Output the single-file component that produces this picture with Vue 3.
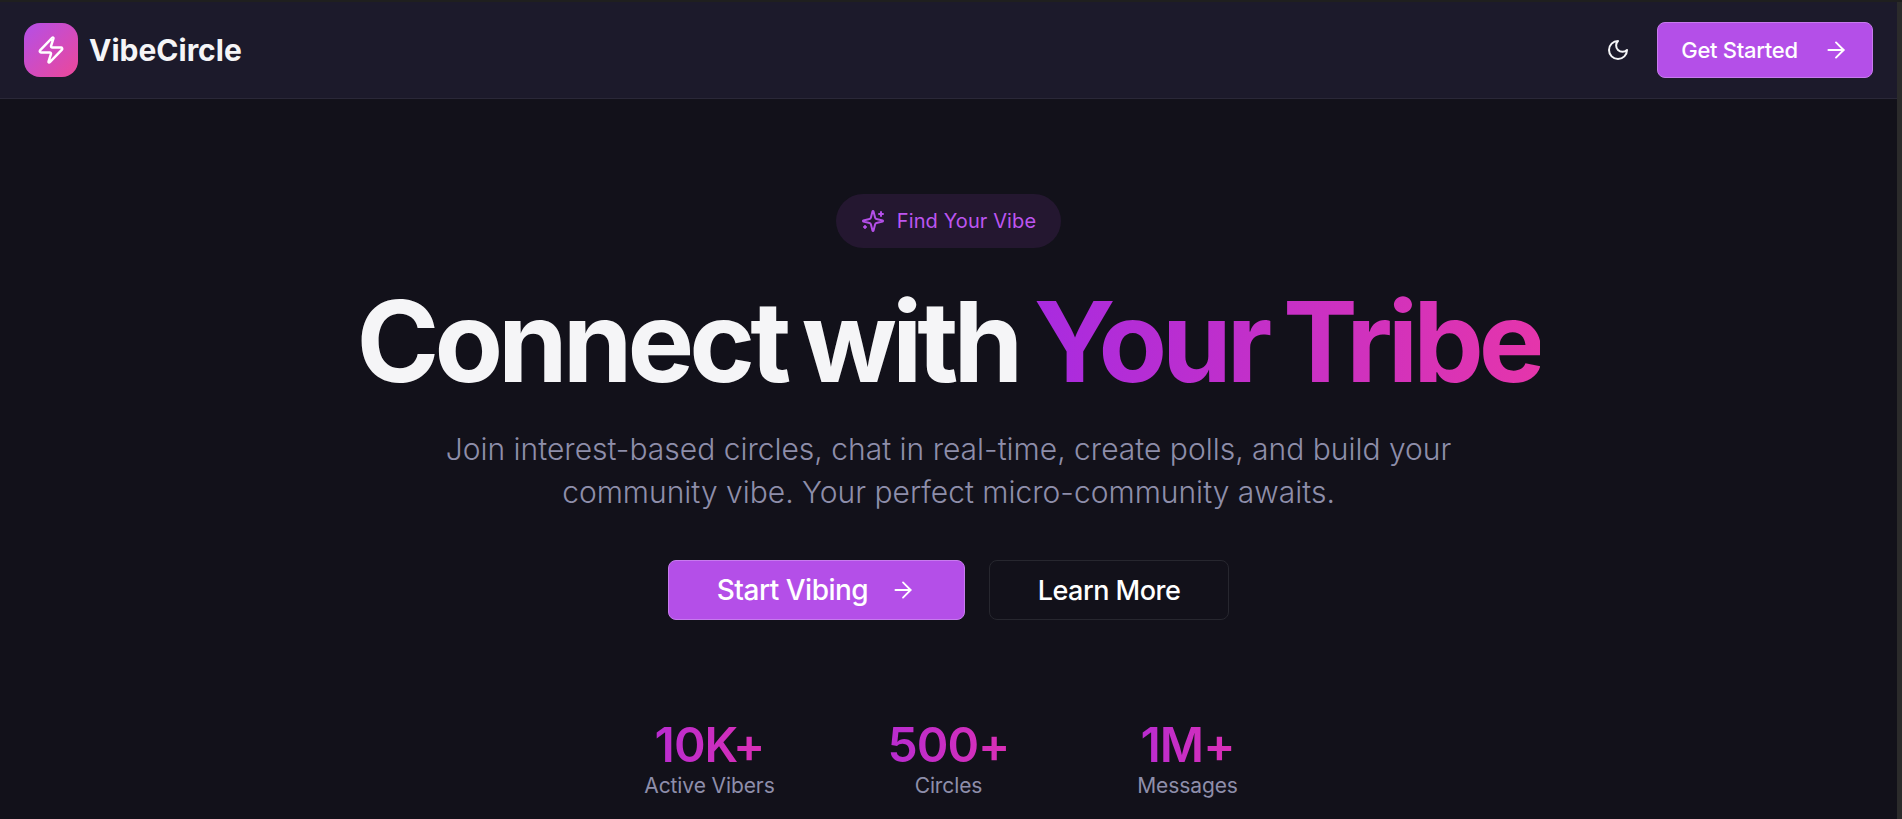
<template>
  <div class="shell">
    <div class="page">
      <header class="topbar">
        <div class="brand">
          <div class="logo">
            <svg width="30" height="30" viewBox="0 0 24 24" fill="none" stroke="#fff" stroke-width="2" stroke-linecap="round" stroke-linejoin="round">
              <path d="M4 14a1 1 0 0 1-.78-1.63l9.9-10.2a.5.5 0 0 1 .86.46l-1.92 6.02A1 1 0 0 0 13 10h7a1 1 0 0 1 .78 1.63l-9.9 10.2a.5.5 0 0 1-.86-.46l1.92-6.02A1 1 0 0 0 11 14z" />
            </svg>
          </div>
          <span class="brand-name">VibeCircle</span>
        </div>
        <div class="actions">
          <button class="theme-btn" aria-label="Toggle theme">
            <svg width="24" height="24" viewBox="0 0 24 24" fill="none" stroke="#f5f5f7" stroke-width="2" stroke-linecap="round" stroke-linejoin="round">
              <path d="M12 3a6 6 0 0 0 9 9 9 9 0 1 1-9-9Z" />
            </svg>
          </button>
          <button class="btn primary small">
            Get Started
            <svg width="26" height="26" viewBox="0 0 24 24" fill="none" stroke="#fff" stroke-width="1.8" stroke-linecap="round" stroke-linejoin="round">
              <path d="M5 12h14" />
              <path d="m12 5 7 7-7 7" />
            </svg>
          </button>
        </div>
      </header>

      <main class="hero">
        <div class="pill">
          <svg width="24" height="24" viewBox="0 0 24 24" fill="none" stroke="#b44fe8" stroke-width="2" stroke-linecap="round" stroke-linejoin="round">
            <path d="M9.94 15.5A2 2 0 0 0 8.5 14.06l-6.14-1.58a.5.5 0 0 1 0-.96L8.5 9.94A2 2 0 0 0 9.94 8.5l1.58-6.14a.5.5 0 0 1 .96 0L14.06 8.5A2 2 0 0 0 15.5 9.94l6.14 1.58a.5.5 0 0 1 0 .96L15.5 14.06a2 2 0 0 0-1.44 1.44l-1.58 6.14a.5.5 0 0 1-.96 0z" />
            <path d="M20 3v4" />
            <path d="M22 5h-4" />
            <path d="M4 17v2" />
            <path d="M5 18H3" />
          </svg>
          <span>Find Your Vibe</span>
        </div>

        <h1 class="title">Connect with <span class="gradient">Your Tribe</span></h1>

        <p class="lead">
          Join interest-based circles, chat in real-time, create polls, and build your<br />
          community vibe. Your perfect micro-community awaits.
        </p>

        <div class="cta">
          <button class="btn primary large">
            Start Vibing
            <svg width="26" height="26" viewBox="0 0 24 24" fill="none" stroke="#fff" stroke-width="1.7" stroke-linecap="round" stroke-linejoin="round">
              <path d="M5 12h14" />
              <path d="m12 5 7 7-7 7" />
            </svg>
          </button>
          <button class="btn outline large">Learn More</button>
        </div>

        <div class="stats">
          <div v-for="s in stats" :key="s.label" class="stat">
            <div class="stat-value">{{ s.value }}</div>
            <div class="stat-label">{{ s.label }}</div>
          </div>
        </div>
      </main>
    </div>
    <div class="scrollbar"></div>
  </div>
</template>

<script setup>
const stats = [
  { value: '10K+', label: 'Active Vibers' },
  { value: '500+', label: 'Circles' },
  { value: '1M+', label: 'Messages' }
]
</script>

<style>
html,
body {
  margin: 0;
  background: #12111a;
}
</style>

<style scoped>
.shell {
  display: flex;
  height: 819px;
  overflow: hidden;
  background: #12111a;
  border-top: 2px solid #1f1f1f;
  box-sizing: border-box;
}

.page {
  flex: 1;
  min-width: 0;
  color: #f5f5f7;
  font-family: Inter, "Liberation Sans", sans-serif;
}

.scrollbar {
  width: 5px;
  background: #2b2b2b;
}

.topbar {
  height: 97px;
  box-sizing: border-box;
  display: flex;
  align-items: center;
  justify-content: space-between;
  padding: 0 24px;
  background: #1c1a2b;
  border-bottom: 1px solid #2a2838;
}

.brand {
  display: flex;
  align-items: center;
  gap: 11px;
}

.logo {
  width: 54px;
  height: 54px;
  border-radius: 16px;
  display: flex;
  align-items: center;
  justify-content: center;
  background: linear-gradient(135deg, #b44fe8, #ec4899);
}

.brand-name {
  font-size: 30px;
  font-weight: 700;
}

.actions {
  display: flex;
  align-items: center;
  gap: 27px;
}

.theme-btn {
  display: flex;
  padding: 0;
  background: none;
  border: none;
}

.btn {
  display: inline-flex;
  align-items: center;
  justify-content: center;
  font-family: inherit;
  color: #fff;
  box-sizing: border-box;
  border-radius: 8px;
}

.primary {
  background: #b44fe8;
  border: 1px solid #c77bee;
}

.outline {
  background: #12111a;
  border: 1px solid #27272f;
}

.small {
  width: 216px;
  height: 56px;
  gap: 25px;
  font-size: 22px;
  font-weight: 500;
  letter-spacing: -0.3px;
}

.large {
  height: 60px;
  gap: 22px;
  font-size: 28px;
  font-weight: 500;
  letter-spacing: -0.5px;
}

.hero {
  display: flex;
  flex-direction: column;
  align-items: center;
  padding-top: 95px;
}

.pill {
  display: flex;
  align-items: center;
  gap: 12px;
  width: 225px;
  height: 54px;
  box-sizing: border-box;
  justify-content: center;
  border-radius: 27px;
  background: #241730;
  color: #bd55f0;
  font-size: 20px;
  font-weight: 400;
  letter-spacing: 0.1px;
}

.title {
  margin: 27px 0 0;
  font-size: 112px;
  line-height: 132px;
  font-weight: 650;
  letter-spacing: -5px;
  word-spacing: -6px;
  white-space: nowrap;
}

.gradient {
  background: linear-gradient(90deg, #a82be0, #e535ab);
  -webkit-background-clip: text;
  background-clip: text;
  color: transparent;
}

.lead {
  margin: 21px 0 0;
  text-align: center;
  font-size: 30px;
  line-height: 43px;
  font-weight: 300;
  color: #8e8eaa;
}

.cta {
  display: flex;
  gap: 24px;
  margin-top: 46px;
}

.cta .primary {
  width: 297px;
}

.cta .outline {
  width: 240px;
  font-size: 27px;
}

.stats {
  display: grid;
  grid-template-columns: repeat(3, 175px);
  column-gap: 64px;
  margin-top: 98px;
}

.stat {
  text-align: center;
}

.stat-value {
  font-size: 48px;
  line-height: 54px;
  font-weight: 600;
  letter-spacing: -1px;
  width: fit-content;
  margin: 0 auto;
  background: linear-gradient(90deg, #b92cd0, #da2fb5);
  -webkit-background-clip: text;
  background-clip: text;
  color: transparent;
}

.stat-label {
  font-size: 21px;
  line-height: 28px;
  letter-spacing: -0.1px;
  color: #8e8eaa;
}
</style>
